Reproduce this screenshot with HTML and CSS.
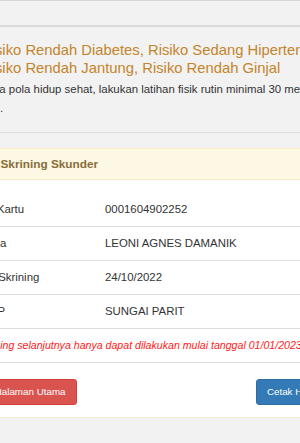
FILE: index.html
```html
<!DOCTYPE html>
<html lang="id">
<head>
    <meta charset="UTF-8">
    <meta name="viewport" content="width=device-width, initial-scale=1.0">
    <title>Hasil Skrining Skunder</title>
    <link rel="stylesheet" href="styles.css">
</head>
<body>
    <div class="page">
        <div class="topbar"></div>
        <div class="result">
            <h4 class="result-title">Risiko Rendah Diabetes, Risiko Sedang Hipertensi,<br>Risiko Rendah Jantung, Risiko Rendah Ginjal</h4>
            <p class="result-note">Jaga pola hidup sehat, lakukan latihan fisik rutin minimal 30 menit setiap<br>hari.</p>
        </div>
        <div class="panel">
            <div class="panel-heading">Hasil Skrining Skunder</div>
            <div class="panel-body">
                <table class="info-table">
                    <tr>
                        <td class="label-col">No. Kartu</td>
                        <td>0001604902252</td>
                    </tr>
                    <tr>
                        <td class="label-col">Nama</td>
                        <td>LEONI AGNES DAMANIK</td>
                    </tr>
                    <tr>
                        <td class="label-col">Tgl. Skrining</td>
                        <td>24/10/2022</td>
                    </tr>
                    <tr>
                        <td class="label-col">FKTP</td>
                        <td>SUNGAI PARIT</td>
                    </tr>
                    <tr class="notice">
                        <td colspan="2">Skrining selanjutnya hanya dapat dilakukan mulai tanggal 01/01/2023</td>
                    </tr>
                </table>
                <div class="actions">
                    <button class="btn btn-danger">Ke Halaman Utama</button>
                    <button class="btn btn-primary">Cetak Hasil</button>
                </div>
            </div>
        </div>
        <div class="footer"></div>
    </div>
</body>
</html>
```

FILE: styles.css
```css
body {
    margin: 0;
    background-color: #f2f2f2;
    font-family: "Liberation Sans", Arial, sans-serif;
    font-size: 11.4px;
    color: #333;
    overflow: hidden;
}

.page {
    width: 385px;
    margin-left: -44px;
}

.topbar {
    height: 24px;
    border-top: 1px solid #d6d6d6;
    border-bottom: 2px solid #dadada;
}

.result {
    padding: 14px 0 14px 25px;
    border-bottom: 1px solid #dcdcdc;
}

.result-title {
    margin: 0;
    font-size: 14.8px;
    font-weight: normal;
    line-height: 18px;
    color: #c4852b;
    white-space: nowrap;
}

.result-note {
    margin: 3px 0 0;
    font-size: 11.4px;
    line-height: 19px;
    white-space: nowrap;
}

.panel {
    margin-top: 15px;
    background: #ffffff;
    border: 1px solid #faebcc;
}

.panel-heading {
    padding: 7px 12px;
    line-height: 16px;
    font-size: 11.8px;
    font-weight: bold;
    color: #8a6d3b;
    background: #fcf8e3;
    border-bottom: 1px solid #faebcc;
}

.panel-body {
    padding: 12px;
}

.info-table {
    width: 100%;
    border-collapse: collapse;
    margin-bottom: 16px;
}

.info-table td {
    padding: 8px 7px;
    line-height: 17px;
    border-bottom: 1px solid #dddddd;
}

.info-table tr:first-child td {
    padding-top: 9px;
}

.info-table .label-col {
    width: 115px;
}

.notice td {
    color: #ff1a1a;
    font-size: 10.6px;
    font-style: italic;
    white-space: nowrap;
}

.actions {
    display: flex;
    justify-content: space-between;
}

.btn {
    font-family: inherit;
    font-size: 9.8px;
    line-height: 14px;
    padding: 5px 10px;
    border: 1px solid;
    border-radius: 3px;
    color: #ffffff;
    cursor: pointer;
}

.btn-danger {
    background-color: #d9534f;
    border-color: #d43f3a;
}

.btn-primary {
    background-color: #337ab7;
    border-color: #2e6da4;
}

.footer {
    margin-top: 25px;
    height: 20px;
    border-top: 1px solid #dddddd;
}
```
